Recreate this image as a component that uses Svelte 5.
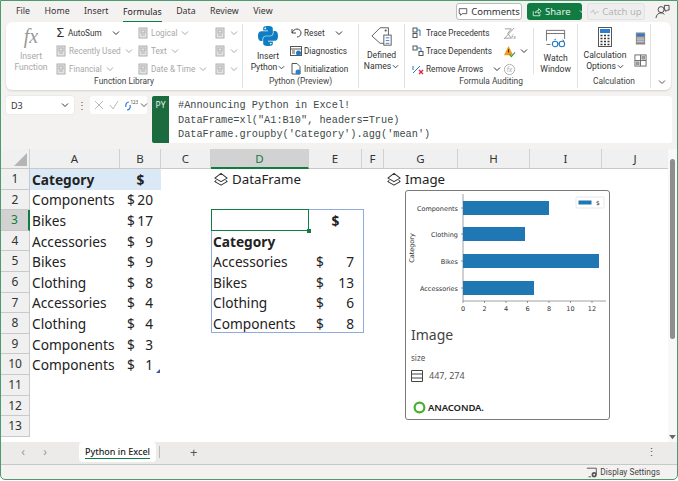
<script>
  const cols = ['A','B','C','D','E','F','G','H','I','J'];
  const rows = [1,2,3,4,5,6,7,8,9,10,11,12,13];
  const left = [['Components','20'],['Bikes','17'],['Accessories','9'],['Bikes','9'],['Clothing','8'],['Accessories','4'],['Clothing','4'],['Components','3'],['Components','1']];
  const frame = [['Accessories','7'],['Bikes','13'],['Clothing','6'],['Components','8']];
  const cells = {};
  left.forEach((r,i)=>{ cells['A'+(i+2)]={t:r[0]}; cells['B'+(i+2)]={d:'$',v:r[1]}; });
  frame.forEach((r,i)=>{ cells['D'+(i+5)]={t:r[0]}; cells['E'+(i+5)]={d:'$',v:r[1]}; });
  cells['D4']={t:'Category',b:true};
  const ticks=[0,2,4,6,8,10,12];
  const bars=[['Components',10,86],['Clothing',36,62],['Bikes',63,136],['Accessories',90,71]];
</script>

{#snippet chev()}
  <svg class="chev" viewBox="0 0 8 8"><path d="M1 2.500 4 5.500 7 2.500" fill="none" stroke="currentColor" stroke-width="1"/></svg>
{/snippet}
{#snippet stack()}
  <svg class="stack" viewBox="0 0 16 16"><path d="M8 1.500 15 7 8 11 1 7Z" fill="none" stroke="#333" stroke-width="1.200" stroke-linejoin="round"/><path d="M2.500 9.500 1 11 8 15 15 11 13.500 9.500" fill="none" stroke="#333" stroke-width="1.200" stroke-linejoin="round"/></svg>
{/snippet}
{#snippet doc()}
  <svg class="ico" viewBox="0 0 12 12"><rect x="2" y="1" width="8" height="10" fill="#e4e4e4" stroke="#b0b0b0"/><rect x="4" y="3" width="4" height="3" fill="none" stroke="#b0b0b0"/><path d="M4 8h4" stroke="#b0b0b0"/></svg>
{/snippet}

<div class="app">
  <header class="menu">
    <nav class="tabs">
      <span>File</span><span>Home</span><span>Insert</span><span class="on">Formulas</span><span>Data</span><span>Review</span><span>View</span>
    </nav>
    <div class="actions">
      <button class="comments"><svg viewBox="0 0 12 12"><path d="M1.500 2h9v6H5L3 10V8H1.500Z" fill="none" stroke="#444"/></svg>Comments</button>
      <button class="share"><svg viewBox="0 0 12 12"><path d="M1.500 5v5.500h8V8M4 7c.5-2 2-3 4-3V2l3 3-3 3V6C6.500 6 5 6 4 7Z" fill="none" stroke="#fff" stroke-width=".9"/></svg>Share<span class="sep">{@render chev()}</span></button>
      <button class="catch"><svg viewBox="0 0 12 8"><path d="M0 4h3l1.500-3 2 6L8 4h4" fill="none" stroke="#bbb"/></svg>Catch up</button>
      <svg class="person" viewBox="0 0 16 16"><circle cx="6.500" cy="6" r="3.200" fill="none" stroke="#444"/><path d="M1 15c.5-3.500 2.500-5.500 5.500-5.500 1.500 0 2.500.5 3.500 1.500M10 1.500h5v5h-2l-1.500 1.500V6.500H10Z" fill="none" stroke="#444"/></svg>
    </div>
  </header>

  <section class="ribbon">
    <div class="group lib">
      <div class="body">
        <div class="big fn"><i class="fx">fx</i><span class="off">Insert<br>Function</span></div>
        <div class="col c1">
          <div class="it"><span class="sigma">Σ</span>AutoSum <span class="gap">{@render chev()}</span></div>
          <div class="it off">{@render doc()}Recently Used{@render chev()}</div>
          <div class="it off">{@render doc()}Financial{@render chev()}</div>
        </div>
        <div class="col c2">
          <div class="it off">{@render doc()}Logical{@render chev()}</div>
          <div class="it off">{@render doc()}Text{@render chev()}</div>
          <div class="it off">{@render doc()}Date &amp; Time{@render chev()}</div>
        </div>
        <div class="col c3">
          <div class="it off">{@render doc()}{@render chev()}</div>
          <div class="it off">{@render doc()}{@render chev()}</div>
          <div class="it off">{@render doc()}{@render chev()}</div>
        </div>
      </div>
      <div class="label">Function Library</div>
    </div>

    <div class="group py">
      <div class="body">
        <div class="big ins">
          <svg class="pylogo" viewBox="0 0 111 111"><g fill="#0f7dc2"><path id="pyl" d="M54.919.001C50.335.022 45.958.413 42.106 1.095 30.760 3.099 28.700 7.295 28.700 15.032V25.251H55.513V28.657H18.638C10.845 28.657 4.022 33.341 1.888 42.251-.574 52.464-.685 58.836 1.888 69.501 3.793 77.439 8.345 83.095 16.138 83.095H25.356V70.845C25.356 61.994 33.013 54.188 42.106 54.188H68.887C76.341 54.188 82.293 48.050 82.293 40.563V15.032C82.293 7.766 76.163 2.308 68.887 1.095 64.281.328 59.502-.021 54.919.001ZM40.419 8.220C43.188 8.220 45.450 10.519 45.450 13.345 45.450 16.161 43.188 18.439 40.419 18.439 37.639 18.439 35.387 16.161 35.387 13.345 35.387 10.519 37.639 8.220 40.419 8.220Z"/><use href="#pyl" transform="rotate(180 55.500 55.500)"/></g></svg>
          <span>Insert<br>Python{@render chev()}</span>
        </div>
        <div class="col c4">
          <div class="it"><svg class="ico" viewBox="0 0 12 12"><path d="M2 2v4h4M2 6c1-2.500 3-4 5-4 2.500 0 4 2 4 4 0 2.500-2 4-4 4" fill="none" stroke="#444"/></svg>Reset <span class="gap">{@render chev()}</span></div>
          <div class="it"><svg class="ico" viewBox="0 0 12 12"><rect x=".5" y="1.500" width="11" height="9" fill="#fff" stroke="#555"/><path d="M.5 4h11M2 6h3M2 8h3" stroke="#555"/><circle cx="8.500" cy="8" r="2.500" fill="#1f7ac4"/></svg>Diagnostics</div>
          <div class="it"><svg class="ico" viewBox="0 0 12 12"><path d="M2 .5h5l3 3V11H2Z" fill="#fff" stroke="#555"/><circle cx="8" cy="9" r="2.500" fill="#2f7fc4"/></svg>Initialization</div>
        </div>
      </div>
      <div class="label">Python (Preview)</div>
    </div>

    <div class="group names">
      <div class="body">
        <div class="big def">
          <svg class="dn" viewBox="0 0 24 24"><path d="M1 12 10 3h9v8M14 20h-4L1 12" fill="none" stroke="#555"/><circle cx="16" cy="6" r="1.200" fill="#555"/><rect x="14" y="11" width="8" height="11" fill="#fff" stroke="#555"/><path d="M16 14h4M16 17h4M16 20h4" stroke="#2f7fc4"/></svg>
          <span>Defined<br>Names{@render chev()}</span>
        </div>
      </div>
    </div>

    <div class="group audit">
      <div class="body">
        <div class="col c5">
          <div class="it"><svg class="ico" viewBox="0 0 12 12"><rect x="1" y="1" width="4" height="4" fill="#fff" stroke="#555"/><rect x="1" y="6.500" width="4" height="4" fill="#fff" stroke="#555"/><path d="M5 3h3v6" fill="none" stroke="#1f7ac4"/></svg>Trace Precedents</div>
          <div class="it"><svg class="ico" viewBox="0 0 12 12"><rect x="1" y="1" width="4" height="4" fill="#fff" stroke="#555"/><rect x="7" y="6.500" width="4" height="4" fill="#fff" stroke="#555"/><path d="M5 3h4v3" fill="none" stroke="#1f7ac4"/></svg>Trace Dependents</div>
          <div class="it"><svg class="ico" viewBox="0 0 12 12"><path d="M1 10 8 3M1 3v4" stroke="#1f7ac4" fill="none"/><path d="M7 7l4 4M11 7l-4 4" stroke="#d23" stroke-width="1.300"/></svg>Remove Arrows <span class="gap">{@render chev()}</span></div>
        </div>
        <div class="col c6">
          <div class="it off"><svg class="ico lg" viewBox="0 0 14 14"><path d="M2 2h7L5 7l4 5H2" fill="none" stroke="#999"/><path d="M1 13 12 1" stroke="#999"/><text x="9" y="13" font-size="6" fill="#999" font-style="italic">fx</text></svg></div>
          <div class="it"><svg class="ico lg" viewBox="0 0 14 14"><path d="M6 1 11 11H1Z" fill="#ef9a1c"/><path d="M6 4.500V8" stroke="#222"/><path d="M7 10l2 2.500L13 8" fill="none" stroke="#3d9a4c" stroke-width="1.200"/></svg>{@render chev()}</div>
          <div class="it off"><svg class="ico lg" viewBox="0 0 14 14"><circle cx="7" cy="7" r="5.500" fill="none" stroke="#aaa"/><text x="4" y="9.500" font-size="7" fill="#aaa" font-style="italic">fx</text></svg></div>
        </div>
        <div class="big watch">
          <svg class="wicon" viewBox="0 0 24 22"><path d="M1.500 13V1.500h20V11M1.500 5h20M1.500 17H6" fill="none" stroke="#666"/><circle cx="11" cy="16.500" r="3" fill="none" stroke="#1f7ac4" stroke-width="1.200"/><circle cx="18.500" cy="16.500" r="3" fill="none" stroke="#1f7ac4" stroke-width="1.200"/><path d="M14 16h1.500M10 12l2-1M19 12l2 1" stroke="#1f7ac4"/></svg>
          <span>Watch<br>Window</span>
        </div>
      </div>
      <div class="label">Formula Auditing</div>
    </div>

    <div class="group calc">
      <div class="body">
        <div class="big opt">
          <svg class="cicon" viewBox="0 0 14 20"><rect x=".5" y=".5" width="13" height="19" fill="#fff" stroke="#555"/><rect x="2" y="2" width="10" height="4" fill="#2b7cd3"/><path d="M2.500 8.500h2m1.500 0h2m1.500 0h2M2.500 11.500h2m1.500 0h2m1.500 0h2M2.500 14.500h2m1.500 0h2m1.500 0h2M2.500 17.500h2m1.500 0h2m1.500 0h2" stroke="#333" stroke-width="1.500"/></svg>
          <span>Calculation<br>Options{@render chev()}</span>
        </div>
        <div class="col c7">
          <svg class="cs" viewBox="0 0 12 14"><rect width="10" height="13" x="1" y=".5" fill="#888"/><rect x="2" y="2" width="8" height="2.500" fill="#2b7cd3"/><path d="M2 6.500h8M2 8.500h8M2 10.500h8" stroke="#ddd"/></svg>
          <svg class="cs" viewBox="0 0 14 14"><rect x="1" y="1" width="12" height="12" fill="#fff" stroke="#666"/><path d="M7 1v12M1 7h12" stroke="#666"/><rect x="8" y="2" width="4" height="4" fill="#999"/><rect x="2" y="8" width="4" height="4" fill="#999"/></svg>
        </div>
      </div>
      <div class="label">Calculation</div>
    </div>
    <div class="collapse">{@render chev()}</div>
  </section>

  <section class="formula">
    <div class="namebox">D3{@render chev()}</div>
    <div class="dots">⋮</div>
    <div class="fbtns">
      <svg viewBox="0 0 10 10"><path d="M1 1l8 8M9 1 1 9" stroke="#bbb" fill="none"/></svg>
      <svg viewBox="0 0 10 10"><path d="M1 5l3 4 5-8" stroke="#bbb" fill="none"/></svg>
      <svg class="refresh" viewBox="0 0 14 12"><path d="M2 8c-1-3 1-5 3-5M6 6c1 3-1 5-3 5" fill="none" stroke="#2b7cd3" stroke-width="1.200"/><text x="6.500" y="4.500" font-size="4.500" fill="#444">123</text></svg>
      {@render chev()}
    </div>
    <div class="py-tag">PY</div>
    <pre class="code">#Announcing Python in Excel!
DataFrame=xl("A1:B10", headers=True)
DataFrame.groupby('Category').agg('mean')</pre>
  </section>

  <section class="sheet">
    <div class="grid">
      <div class="corner"><svg viewBox="0 0 14 14"><path d="M14 0V14H0Z" fill="#b5b5b5"/></svg></div>
      {#each cols as c}
        <div class="ch" class:sel={c==='D'}>{c}</div>
      {/each}
      {#each rows as r}
        <div class="rh" class:sel={r===3}>{r}</div>
        {#each cols as c}
          {@const x = cells[c+r]}
          <div class="cell" class:head={r===1 && (c==='A'||c==='B')} class:bold={x?.b}>
            {#if r===1 && c==='A'}<b>Category</b>
            {:else if r===1 && c==='B'}<b class="ctr">$</b>
            {:else if r===1 && c==='D'}{@render stack()}<span class="df">DataFrame</span>
            {:else if r===1 && c==='G'}{@render stack()}<span class="df">Image</span>
            {:else if r===3 && c==='E'}<b class="ctr">$</b>
            {:else if x?.d}<span class="money"><span>{x.d}</span><span>{x.v}</span></span>
            {:else if x}{x.t}{/if}
          </div>
        {/each}
      {/each}
    </div>

    <div class="mark"></div>
    <div class="table-box"></div>
    <div class="selected"><span class="handle"></span></div>

    <aside class="card">
      <svg class="chart" viewBox="0 0 203 124">
        <path d="M57 3V110H200" fill="none" stroke="#888" stroke-width=".8"/>
        {#each bars as [n,y,w]}
          <rect x="57" y={y} width={w} height="14" fill="#1f77b4"/>
          <text x="52" y={y+9.500} text-anchor="end" font-size="6.500" fill="#333">{n}</text>
          <path d="M55 {y+7}h2" stroke="#555" stroke-width=".6"/>
        {/each}
        {#each ticks as t}
          <path d="M{57+t*10.75} 110v2" stroke="#555" stroke-width=".6"/>
          <text x={57+t*10.75} y="120" text-anchor="middle" font-size="6.500" fill="#333">{t}</text>
        {/each}
        <text transform="translate(8 57) rotate(-90)" text-anchor="middle" font-size="6.500" fill="#333">Category</text>
        <rect x="170" y="6" width="28" height="11" rx="1.500" fill="#fff" stroke="#ddd" stroke-width=".7"/>
        <rect x="172.500" y="9.500" width="13" height="4" fill="#1f77b4"/>
        <text x="190" y="14" font-size="6" fill="#333">$</text>
      </svg>
      <h3>Image</h3>
      <div class="k">size</div>
      <div class="v"><svg viewBox="0 0 12 12"><path d="M.5.5h11v11H.5ZM.5 4h11M.5 8h11" fill="none" stroke="#444"/></svg>447, 274</div>
      <div class="ana"><svg viewBox="0 0 12 12"><circle cx="6" cy="6" r="4.500" fill="none" stroke="#43b02a" stroke-width="2"/></svg>ANACONDA.</div>
    </aside>

    <div class="vbar"><span class="thumb"></span><svg viewBox="0 0 8 6"><path d="M0 0h8L4 5Z" fill="#666"/></svg></div>
  </section>

  <section class="tabbar">
    <span class="nav">‹</span><span class="nav">›</span>
    <div class="tab"><span>Python in Excel</span></div>
    <span class="tsep"></span>
    <span class="plus">+</span>
    <span class="more">⋮</span>
  </section>

  <footer class="status">
    <svg viewBox="0 0 14 12"><path d="M1 1h11v7H7M3 11h3" fill="none" stroke="#444"/><circle cx="9.500" cy="8.500" r="3" fill="#555"/><circle cx="9.500" cy="8.500" r="1" fill="#fff"/></svg>
    Display Settings
  </footer>
</div>

<style>
  :global(body){margin:0;background:#fff}
  .app{width:678px;height:480px;box-sizing:border-box;border:1px solid #4b9a70;border-radius:0 0 5px 5px;background:#f3f2f1;font-family:"Noto Sans",sans-serif;color:#333;display:flex;flex-direction:column;overflow:hidden;font-size:8.500px}
  svg{display:block;flex:none}
  button{font-family:inherit;display:flex;align-items:center;gap:3px;padding:0;box-sizing:border-box;height:17px;border-radius:3px;font-size:9.500px}

  .menu{height:21px;flex:none;display:flex;align-items:center;justify-content:space-between;padding:0 5px 0 15px}
  .tabs{display:flex;gap:14.500px;font-size:8.800px;height:21px;align-items:center}
  .tabs span{position:relative;line-height:21px}
  .tabs .on{color:#222;border-bottom:1.500px solid #107c41;line-height:18px;margin-top:1px;height:18px}
  .actions{display:flex;align-items:center}
  .comments{width:66px;background:#fff;border:1px solid #bbb;color:#333;justify-content:center;margin-right:5px}
  .comments svg{width:10px;height:10px}
  .share{width:55px;background:#107c41;border:0;padding-left:5px;margin-right:5px;color:#e6f3ec}
  .share>svg{width:10px;height:10px}
  .share .sep{margin-left:auto;padding:0 3px}
  .catch{width:58px;background:#eeeeee;border:1px solid #e2e2e2;color:#b5b5b5;justify-content:center;margin-right:10px}
  .catch svg{width:9px;height:6px}
  .person{width:15px;height:15px;margin-right:2px}
  .chev{width:8px;height:8px;display:inline-block;vertical-align:-1px;flex:none;margin-left:2px}

  .ribbon{margin:0 6px 0 5px;height:68px;background:#fff;border-radius:6px;box-shadow:0 1px 2px #0002;display:flex;position:relative;flex:none;font-family:Roboto,sans-serif}
  .group{display:flex;flex-direction:column;border-right:1px solid #e1e1e1;margin:2px 0 0;box-sizing:border-box;position:relative;height:64px}
  .body{display:flex;flex:1;min-height:0}
  .label{height:14px;line-height:14px;text-align:center;font-size:8.400px;color:#444;flex:none}
  .lib{width:237px}.py{width:116px}.names{width:46px}.audit{width:173px}.calc{width:73px}
  .big{display:flex;flex-direction:column;align-items:center;text-align:center;line-height:11px;font-size:8.600px}
  .big span{white-space:nowrap}
  .big .chev{margin-left:1px;width:7px;height:7px}
  .off{color:#a8a8a8}
  .fn{width:34px;margin-left:8px}
  .fx{font-family:"Liberation Serif",serif;font-size:20px;line-height:24px;color:#999;height:27px;flex:none}
  .col{display:flex;flex-direction:column}
  .it{height:18px;flex:none;display:flex;align-items:center;gap:2px;white-space:nowrap;font-size:8.200px}
  .ico{width:12px;height:12px;flex:none}
  .ico.lg{width:13px;height:13px}
  .gap{margin-left:6px}
  .sigma{font-size:13px;width:11px;text-align:center;line-height:12px}
  .c1{margin-left:7px;width:82px}
  .c2{width:77px}
  .c3{width:20px}
  .ins{width:36px;margin-left:7px}
  .pylogo{width:20px;height:20px;margin:2px 0 5px}
  .c4{margin-left:4px}
  .def{width:46px}
  .dn{width:22px;height:22px;margin:1px 0 3px}
  .c5{width:92px;margin-left:7px}
  .c6{width:30px}
  .watch{width:44px;border-left:1px solid #e1e1e1;height:46px;margin-top:4px;box-sizing:border-box}
  .wicon{width:22px;height:20px;margin:1px 0 4px}
  .opt{width:46px;margin-left:4px}
  .cicon{width:14px;height:20px;margin:3px 0 3px}
  .c7{gap:9px;padding:8px 0 0 6px}
  .cs{width:13px;height:13px}
  .collapse{position:absolute;right:3px;bottom:3px;width:12px;color:#555}

  .formula{flex:none;height:47px;margin:6px 5px 0 5px;display:flex;align-items:flex-start}
  .namebox{width:68px;height:18px;background:#fff;border-radius:3px;box-sizing:border-box;padding:0 5px;display:flex;justify-content:space-between;align-items:center;font-size:9px;box-shadow:0 0 0 .5px #e3e3e3}
  .dots{width:16px;text-align:center;line-height:18px;font-size:10px;color:#555}
  .fbtns{width:57px;height:18px;background:#fff;border-radius:3px;display:flex;align-items:center;gap:5px;padding-left:4px;box-sizing:border-box;margin-right:5px;color:#555}
  .fbtns svg{width:10px;height:10px}
  .fbtns svg.refresh{width:14px;height:12px}
  .fbtns svg.chev{width:8px;height:8px;margin-left:-3px}
  .py-tag{width:17px;height:47px;background:#1c6b3f;color:#e8f3ec;font-size:8.500px;text-align:center;line-height:18px;border-radius:2px 0 0 2px;flex:none}
  .code{flex:1;margin:0;height:47px;background:#fff;border-radius:0 3px 3px 0;font-family:"Liberation Mono",monospace;font-size:10.250px;line-height:14.500px;padding:2px 0 0 9px;color:#3e4a4a;box-sizing:border-box}

  .sheet{flex:none;margin-top:6px;height:293px;background:#fff;position:relative;overflow:hidden}
  .grid{display:grid;grid-template-columns:29px 90px 41px 50px 98px 53px 22px 74px 72px 72px 67px;grid-template-rows:20px repeat(13,20.600px);font-size:14px;color:#222;background:#fff}
  .corner{background:#f0f0f0;border-bottom:1px solid #c9c9c9;border-right:1px solid #d0d0d0;display:flex;align-items:flex-end;justify-content:flex-end;padding:0 2px 2px 0;box-sizing:border-box}
  .corner svg{width:13px;height:13px}
  .ch{background:#f0f0f0;border-bottom:1px solid #c9c9c9;border-right:1px solid #d0d0d0;text-align:center;line-height:19px;font-size:11.500px;box-sizing:border-box;color:#333}
  .ch.sel{background:#d2d2d2;color:#107c41;border-bottom:2px solid #107c41}
  .rh{background:#f0f0f0;border-bottom:1px solid #c9c9c9;border-right:1px solid #c9c9c9;text-align:center;line-height:20px;font-size:12px;box-sizing:border-box;color:#333}
  .rh.sel{background:#d2d2d2;color:#107c41;border-right:2px solid #107c41}
  .cell{padding:0 2px;white-space:nowrap;line-height:21px;font-size:13.700px;display:flex;align-items:center;min-width:0;box-sizing:border-box}
  .cell.head{background:#dbe9f7}
  .bold{font-weight:700}
  .ctr{display:block;width:100%;text-align:center}
  .money{display:flex;justify-content:space-between;width:100%;padding:0 6px 0 5px;box-sizing:border-box}
  .stack{width:14px;height:14px;margin:0 4px 0 1px;flex:none}
  .df{font-size:13.300px}

  .mark{position:absolute;left:155px;top:220px;width:4px;height:4px;background:#3b55b5;clip-path:polygon(100% 0,100% 100%,0 100%)}
  .table-box{position:absolute;left:210px;top:60px;width:153px;height:124px;box-sizing:border-box;border:1px solid #8faadc;pointer-events:none}
  .selected{position:absolute;left:210px;top:60px;width:98px;height:22px;box-sizing:border-box;border:1.500px solid #107c41}
  .handle{position:absolute;right:-3px;bottom:-3px;width:4px;height:4px;background:#107c41}

  .card{position:absolute;left:404px;top:41px;width:205px;height:230px;box-sizing:border-box;border:1px solid #7a7a7a;border-radius:3px;background:#fff;padding:0}
  .chart{width:203px;height:124px;font-family:"DejaVu Sans",sans-serif}
  h3{font-weight:400;font-size:14px;margin:10px 0 0 5px;line-height:20px;color:#444}
  .k{font-size:8px;margin:7px 0 0 5px;color:#555;line-height:11px}
  .v{display:flex;align-items:center;gap:6px;margin:7px 0 0 5px;font-size:9px;color:#555;line-height:12px}
  .v svg{width:12px;height:12px}
  .ana{display:flex;align-items:center;gap:2px;margin:19px 0 0 7px;font-size:9.500px;font-weight:600;color:#222;letter-spacing:-.1px;line-height:13px}
  .ana svg{width:13px;height:13px}

  .vbar{position:absolute;right:0;top:0;bottom:0;width:9px;background:#f8f8f8}
  .thumb{position:absolute;left:2px;top:10px;width:5px;height:180px;background:#8e8e8e;border-radius:3px}
  .vbar svg{position:absolute;left:1px;bottom:2px;width:7px;height:5px}

  .tabbar{flex:none;height:22px;background:#edebe9;border-bottom:1px solid #c8c8c8;display:flex;align-items:flex-start;position:relative;line-height:20px}
  .nav{width:22px;text-align:center;color:#999;font-size:12px}
  .nav:first-child{margin-left:11px}
  .tab{margin-left:23px;width:77px;height:20px;background:#fff;border-radius:4px;display:flex;justify-content:center;align-items:center;font-size:9px;color:#222;font-weight:500}
  .tab span{border-bottom:1.500px solid #107c41;line-height:11px;padding-bottom:1px}
  .tsep{width:1px;height:12px;background:#bbb;margin:4px 0 0 3px}
  .plus{margin-left:30px;font-size:13px;color:#555}
  .more{margin-left:auto;margin-right:20px;font-size:11px;color:#555}

  .status{flex:1;display:flex;align-items:center;justify-content:flex-end;gap:2px;padding-right:17px;font-size:8px;font-family:Roboto,sans-serif;font-size:8.400px;color:#444}
  .status svg{width:12px;height:11px}
</style>
